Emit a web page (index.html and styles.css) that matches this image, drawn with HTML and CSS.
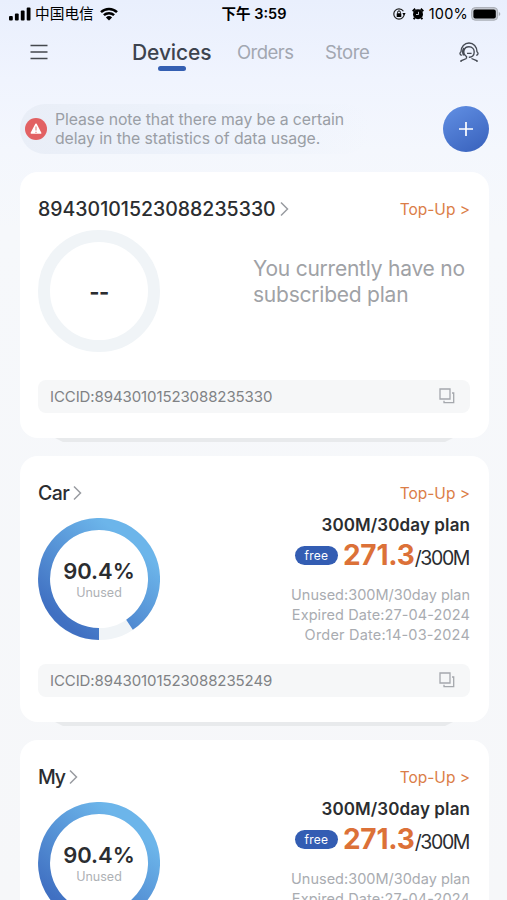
FILE: index.html
```html
<!DOCTYPE html>
<html lang="en">
<head>
<meta charset="utf-8">
<title>Devices</title>
<link rel="stylesheet" href="styles.css">
</head>
<body>
<svg class="defs" width="0" height="0">
  <defs>
    <linearGradient id="ring" gradientUnits="userSpaceOnUse" x1="105" y1="35" x2="40" y2="115">
      <stop offset="0" stop-color="#6cb5ea"/><stop offset="1" stop-color="#4070c2"/>
    </linearGradient>
    <symbol id="copy" viewBox="0 0 16 16">
      <path d="M1 1h10v10H1zM13 5h1.700v9.700H5v-1.900" fill="none" stroke="#a5a8ad" stroke-width="1.300"/>
    </symbol>
    <symbol id="chevron" viewBox="0 0 9 16">
      <path d="M1 1.500 7.500 8 1 14.500" fill="none" stroke="#999ca1" stroke-width="1.500"/>
    </symbol>
  </defs>
</svg>
<div class="screen">
  <div class="status">
    <div class="carrier">
      <svg width="22" height="14" viewBox="0 0 22 14"><rect x="0" y="9" width="3.800" height="4.500" rx="1"/><rect x="5.900" y="6.500" width="3.800" height="7" rx="1"/><rect x="11.800" y="3.500" width="3.800" height="10" rx="1"/><rect x="17.700" y="0.500" width="3.800" height="13" rx="1"/></svg>
      <span class="net">中国电信</span>
      <svg width="18" height="14" viewBox="0 0 18 14"><path d="M1 5.200a11.500 11.500 0 0 1 16 0M3.900 8.200a7.400 7.400 0 0 1 10.200 0" fill="none" stroke="#000" stroke-width="2.500"/><path d="M9 13.500 5.900 10.400a4.500 4.500 0 0 1 6.200 0z"/></svg>
    </div>
    <div class="time">下午 3:59</div>
    <div class="power">
      <svg width="14" height="12" viewBox="0 0 14 12"><circle cx="6" cy="6" r="5.200" fill="none" stroke="#222" stroke-width="1.200" stroke-dasharray="29 3.700"/><path d="M9.300 5h3.400l-1.700 2.600z"/><rect x="3.700" y="5.300" width="4.600" height="3.600" rx=".5"/><path d="M4.600 5.500V4.300a1.400 1.400 0 0 1 2.800 0v1.200" fill="none" stroke="#000"/></svg>
      <svg class="alarm" width="12" height="12" viewBox="0 0 12 12"><circle cx="6" cy="6.300" r="5"/><path d="M.7 3.200 3.200.8M11.300 3.200 8.800.8M2.700 9.800 1.700 11.300M9.300 9.800l1 1.500" stroke="#000" stroke-width="1.900"/><path d="M6.500 3.800v2.700H4" fill="none" stroke="#edf2fd" stroke-width=".8"/></svg>
      <span class="pct">100%</span>
      <svg width="30" height="14" viewBox="0 0 30 14"><rect x=".6" y=".6" width="26" height="12.600" rx="3.600" fill="#c6cad2" stroke="#a9adb5"/><rect x="2.400" y="2.400" width="22.400" height="9" rx="2"/><path d="M27.800 5v4q1.500-.5 1.500-2t-1.500-2z" fill="#a9adb5"/></svg>
    </div>
  </div>
  <div class="nav">
    <svg class="menu" width="18" height="16" viewBox="0 0 18 16"><path d="M.5 1.500h17M.5 8h17M.5 14.500h17" stroke="#44484e" stroke-width="1.700"/></svg>
    <div class="tab tab-on">Devices</div>
    <div class="tab orders">Orders</div>
    <div class="tab store">Store</div>
    <svg class="agent" width="20" height="21" viewBox="0 0 20 21"><path d="M2.800 13.300C.4 12.800.6 10.800 2 9.800 2 4.800 5.500 1 10 1s8 3.800 8 8.800c1.400 1 1.600 3-.8 3.500M7.500 16.500v-2C3.200 12 4.200 4.800 10 4.800c3.500 0 5.200 2.600 5.200 5.200 0 3.500-2.200 5.500-5.400 5.200M8 11.300h4.600M4.500 13.500C3.200 10.500 3.700 7.500 5 6M7.500 16.500 2 18.800V20M12.500 16.500 18 18.800V20" fill="none" stroke="#454a53" stroke-width="1.350"/></svg>
  </div>
  <div class="notice-row">
    <div class="notice">
      <svg width="22" height="22" viewBox="0 0 22 22"><circle cx="11" cy="11" r="11" fill="#e26163"/><path d="M11 6.200 15.700 15H6.300z" fill="#fff" stroke="#fff" stroke-width="1.500" stroke-linejoin="round"/><path d="M11 8.500v4M11 13.700v1.200" stroke="#e58b8c" stroke-width="1.200"/></svg>
      <p>Please note that there may be a certain<br>delay in the statistics of data usage.</p>
    </div>
    <div class="add"><svg width="16" height="16" viewBox="0 0 16 16"><path d="M8 1v14M1 8h14" stroke="#fff" stroke-width="1.700"/></svg></div>
  </div>

  <div class="card">
    <div class="head"><div class="name num">89430101523088235330</div><svg class="chev" width="9" height="16"><use href="#chevron"/></svg><div class="topup">Top-Up &gt;</div></div>
    <div class="body">
      <div class="gauge"><svg width="122" height="122"><circle cx="61" cy="61" r="55" class="track"/></svg><div class="label dash">--</div></div>
      <div class="empty">You currently have no<br>subscribed plan</div>
    </div>
    <div class="iccid"><span>ICCID:89430101523088235330</span><svg width="16" height="16"><use href="#copy"/></svg></div>
  </div>
  <div class="edge"></div>

  <div class="card used">
    <div class="head"><div class="name">Car</div><svg class="chev" width="9" height="16"><use href="#chevron"/></svg><div class="topup">Top-Up &gt;</div></div>
    <div class="body">
      <div class="gauge"><svg width="122" height="122"><circle cx="61" cy="61" r="55" class="track"/><path d="M61 116A55 55 0 1 1 91.500 106.800" class="arc"/></svg><div class="label"><b>90.4%</b><small>Unused</small></div></div>
      <div class="plan">
        <div class="title">300M/30day plan</div>
        <div class="usage"><span class="free">free</span><span class="left">271.3</span><span class="total">/300M</span></div>
        <div class="meta"><div class="m1">Unused:300M/30day plan</div><div class="m2">Expired Date:27-04-2024</div><div class="m3">Order Date:14-03-2024</div></div>
      </div>
    </div>
    <div class="iccid"><span>ICCID:89430101523088235249</span><svg width="16" height="16"><use href="#copy"/></svg></div>
  </div>
  <div class="edge"></div>

  <div class="card used">
    <div class="head"><div class="name my">My</div><svg class="chev" width="9" height="16"><use href="#chevron"/></svg><div class="topup">Top-Up &gt;</div></div>
    <div class="body">
      <div class="gauge"><svg width="122" height="122"><circle cx="61" cy="61" r="55" class="track"/><path d="M61 116A55 55 0 1 1 91.500 106.800" class="arc"/></svg><div class="label"><b>90.4%</b><small>Unused</small></div></div>
      <div class="plan">
        <div class="title">300M/30day plan</div>
        <div class="usage"><span class="free">free</span><span class="left">271.3</span><span class="total">/300M</span></div>
        <div class="meta"><div class="m1">Unused:300M/30day plan</div><div class="m2">Expired Date:27-04-2024</div></div>
      </div>
    </div>
  </div>
</div>
</body>
</html>
```
FILE: styles.css
```css
* { box-sizing: border-box; }
body { margin: 0; font-family: Inter, "Noto Sans CJK SC", sans-serif; color: #2b2d30; }
svg { display: block; flex: none; }
.defs { position: absolute; }
.screen { width: 507px; height: 900px; overflow: hidden; background: linear-gradient(180deg, #e9effd 0, #f0f4fe 80px, #f4f7fd 150px, #f6f8fb 230px, #f6f7f9 100%); white-space: nowrap; }
.status { height: 28px; display: grid; grid-template-columns: 1fr auto 1fr; align-items: center; padding: 0 6px 0 9px; color: #000; }
.carrier { display: flex; align-items: center; }
.net { font-size: 14.700px; margin: 0 6px 0 4px; line-height: 20px; }
.time { font-size: 14.500px; font-weight: 600; line-height: 20px; margin-right: 2px; }
.power { display: flex; align-items: center; justify-content: flex-end; }
.alarm { margin: 0 5px 0 5px; }
.pct { font-size: 14.500px; line-height: 20px; margin-right: 3px; letter-spacing: .2px; }
.nav { height: 76px; display: flex; align-items: flex-start; color: #a2a7b1; font-size: 18.500px; }
.menu { margin: 16px 0 0 30px; }
.tab { line-height: 24px; margin-top: 12px; }
.tab-on { margin-left: 84px; width: 80px; color: #3d434e; font-size: 21px; font-weight: 500; letter-spacing: -.1px; padding-top: 1px; }
.tab-on::after { content: ""; display: block; width: 28px; height: 5px; border-radius: 3px; background: #345fb2; margin: 1px auto 0; }
.orders { margin-left: 25px; width: 58px; letter-spacing: -.55px; }
.store { margin-left: 30px; width: 45px; letter-spacing: -.35px; }
.agent { margin: 14px 0 0 89px; }
.notice-row { height: 50px; margin: 0 18px 0 20px; display: flex; justify-content: space-between; align-items: center; }
.notice { width: 350px; height: 50px; border-radius: 25px; display: flex; align-items: center; padding-left: 5px; background: linear-gradient(90deg, #e9eef7, #edf2fb 50%, #f3f6fd00); }
.notice p { margin: 0 0 0 8px; font-size: 15.800px; line-height: 19px; color: #9a9ea5; letter-spacing: -.07px; }
.add { width: 46px; height: 46px; border-radius: 50%; display: grid; place-items: center; background: linear-gradient(150deg, #6290e4, #3760bb); }
.card { height: 266px; margin: 0 18px 0 20px; padding: 18px 19px 0 18px; border-radius: 18px; background: #fff; }
.notice-row + .card { margin-top: 18px; }
.edge { width: 398px; height: 4px; margin: 0 0 14px 55px; background: #e8eaec; clip-path: polygon(0 0, 100% 0, 98% 100%, 2% 100%); }
.head { display: flex; align-items: center; height: 40px; margin-top: -1px; }
.name { font-size: 19.500px; font-weight: 500; letter-spacing: -.5px; }
.num { letter-spacing: 0; }
.my { letter-spacing: -1.100px; }
.chev { margin-left: 4px; }
.topup { margin-left: auto; font-size: 15.500px; color: #db7d47; }
.body { height: 133px; margin-top: 1px; display: flex; justify-content: space-between; }
.used .body { height: 129px; margin-top: 5px; }
.gauge { display: grid; place-items: center; width: 122px; height: 122px; }
.gauge > * { grid-area: 1 / 1; }
.track { fill: none; stroke: #f0f4f7; stroke-width: 12; }
.arc { fill: none; stroke: url(#ring); stroke-width: 12; }
.label { text-align: center; }
.label b { display: block; font-size: 22px; line-height: 27px; font-weight: 600; }
.label small { display: block; font-size: 12.500px; line-height: 16px; color: #aeb1b5; }
.dash { font-size: 22px; font-weight: 700; letter-spacing: -.5px; padding-top: 2px; }
.empty { width: 217px; padding-top: 26px; font-size: 21px; line-height: 26px; color: #9fa2a6; letter-spacing: -.23px; }
.plan { display: flex; flex-direction: column; align-items: flex-end; }
.title { font-size: 17px; line-height: 22px; font-weight: 600; margin-top: -4px; letter-spacing: .1px; }
.usage { display: flex; align-items: baseline; height: 36px; line-height: 36px; margin-top: 1px; }
.free { align-self: flex-start; background: #335db3; color: #fff; font-size: 12px; letter-spacing: .3px; line-height: 19px; width: 43px; height: 19px; border-radius: 10px; text-align: center; margin: 9px 5px 0 0; }
.left { font-size: 28px; font-weight: 700; color: #dc7138; letter-spacing: -.2px; }
.total { font-size: 19.500px; letter-spacing: -1.400px; margin-right: 1px; }
.meta { margin-top: 12px; font-size: 14.500px; line-height: 20px; color: #a9acb1; text-align: right; }
.m2 { letter-spacing: .1px; }
.m3 { letter-spacing: .2px; }
.iccid { height: 33px; margin-top: 17px; border-radius: 8px; background: #f6f7f8; padding: 0 15px 1px 12px; display: flex; justify-content: space-between; align-items: center; font-size: 15px; letter-spacing: -.1px; color: #808285; }
```
